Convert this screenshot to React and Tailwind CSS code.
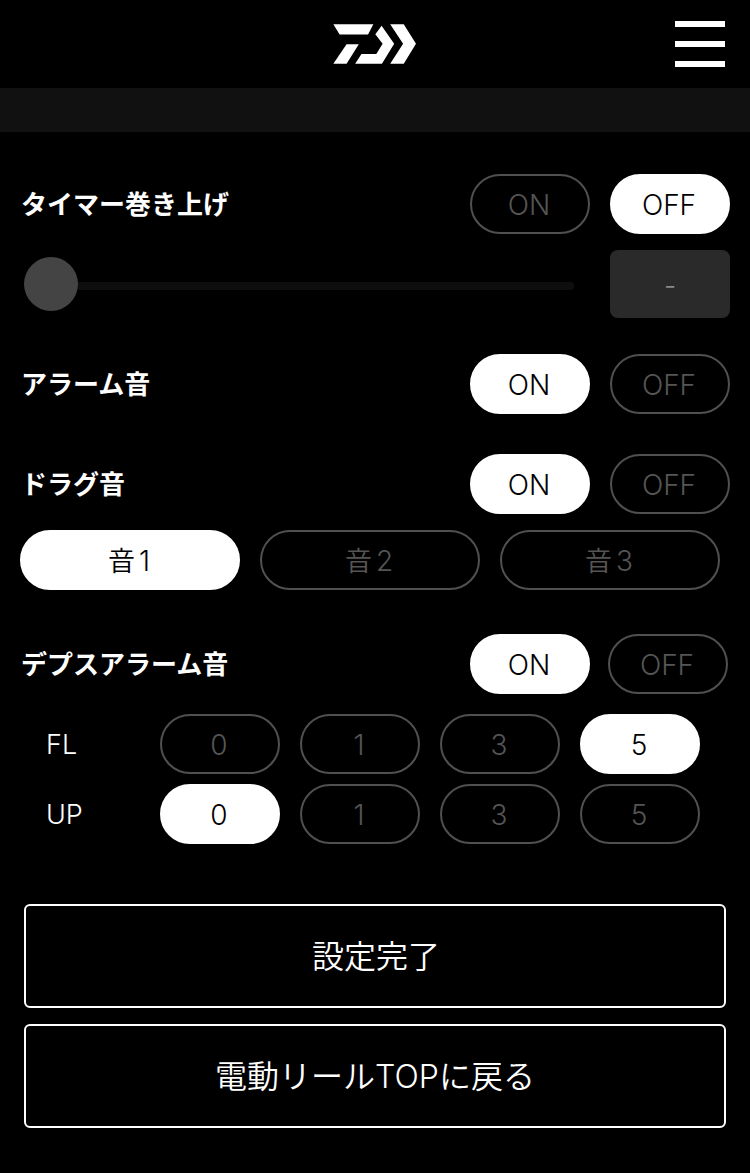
import React, { useState } from 'react';
import clsx from 'clsx';

const SOUNDS = ['1', '2', '3'];
const DEPTHS = ['0', '1', '3', '5'];

function Logo() {
  return (
    <svg viewBox="38 41 252 121" className="w-[84px] h-[40px]" fill="#fff" aria-label="DAIWA">
      <path d="M38 42H159L143 73H57Z" />
      <path d="M78 102H115L78 161H38Z" />
      <path d="M184 46L222 101L185 161H104L123 132H168L187 101L165 72Z" />
      <path d="M210 42H251L288 101L251 161H210L249 101Z" />
    </svg>
  );
}

function Pill({ active, onClick, className, children }) {
  return (
    <button
      onClick={onClick}
      className={clsx(
        'flex h-[60px] shrink-0 items-center justify-center rounded-full border-2 pt-0.5 pr-0.5 text-[28px] leading-none font-[350]',
        active ? 'border-white bg-white text-black' : 'border-[#505050] text-[#555555]',
        className
      )}
    >
      {children}
    </button>
  );
}

function ToggleRow({ label, on, onChange, className = 'pr-5', gap = 'gap-5' }) {
  return (
    <div className={clsx('flex items-center justify-between pl-[21px]', className)}>
      <h2 className="pt-0.5 text-[26px] leading-none font-bold">{label}</h2>
      <div className={clsx('flex', gap)}>
        <Pill active={on} onClick={() => onChange(true)} className="w-[120px]">ON</Pill>
        <Pill active={!on} onClick={() => onChange(false)} className="w-[120px]">OFF</Pill>
      </div>
    </div>
  );
}

function DepthRow({ label, value, onChange }) {
  return (
    <div className="flex items-center pl-[46px]">
      <span className="w-[114px] text-[27px] leading-none font-[350]">{label}</span>
      <div className="flex gap-5">
        {DEPTHS.map((depth) => (
          <Pill key={depth} active={value === depth} onClick={() => onChange(depth)} className="w-[120px]">
            {depth}
          </Pill>
        ))}
      </div>
    </div>
  );
}

export default function App() {
  const [timer, setTimer] = useState(false);
  const [alarm, setAlarm] = useState(true);
  const [drag, setDrag] = useState(true);
  const [sound, setSound] = useState('1');
  const [depthAlarm, setDepthAlarm] = useState(true);
  const [fl, setFl] = useState('5');
  const [up, setUp] = useState('0');

  return (
    <div className="min-h-[1173px] w-full bg-black font-['Inter','Noto_Sans_CJK_JP',sans-serif] font-light text-white">
      {/* Header */}
      <header className="grid h-[88px] grid-cols-3 items-center pr-[25px]">
        <span />
        <div className="flex justify-center pl-[25px]">
          <Logo />
        </div>
        <button className="flex w-[50px] flex-col gap-3.5 justify-self-end" aria-label="menu">
          <span className="h-1.5 bg-white" />
          <span className="h-1.5 bg-white" />
          <span className="h-1.5 bg-white" />
        </button>
      </header>
      <div className="h-11 bg-[#111111]" />

      <main className="pt-[42px]">
        <ToggleRow label="タイマー巻き上げ" on={timer} onChange={setTimer} />

        {/* Timer slider */}
        <div className="mt-4 flex h-[68px] items-center justify-between pr-5 pl-6">
          <div className="flex w-[550px] items-center">
            <div className="size-[54px] shrink-0 rounded-full bg-[#444444]" />
            <div className="mt-1 h-2 flex-1 rounded-r-full bg-[#0e0e0e]" />
          </div>
          <div className="flex h-full w-[120px] items-center justify-center rounded-lg bg-[#2a2a2a] pt-1 text-[27px] text-[#8a8a8a]">
            -
          </div>
        </div>

        <div className="mt-9">
          <ToggleRow label="アラーム音" on={alarm} onChange={setAlarm} />
        </div>

        <div className="mt-10">
          <ToggleRow label="ドラグ音" on={drag} onChange={setDrag} />
          <div className="mt-4 flex gap-5 pl-5">
            {SOUNDS.map((n) => (
              <Pill key={n} active={sound === n} onClick={() => setSound(n)} className="w-[220px] gap-1">
                <span className="text-[27px]">音</span>
                <span>{n}</span>
              </Pill>
            ))}
          </div>
        </div>

        <div className="mt-11">
          <ToggleRow
            label="デプスアラーム音"
            on={depthAlarm}
            onChange={setDepthAlarm}
            className="pr-[22px]"
            gap="gap-[18px]"
          />
          <div className="mt-5 space-y-2.5">
            <DepthRow label="FL" value={fl} onChange={setFl} />
            <DepthRow label="UP" value={up} onChange={setUp} />
          </div>
        </div>

        <div className="mt-[60px] space-y-4 px-6">
          <button className="block h-[104px] w-full rounded-md border-2 border-white pt-0.5 pl-0.5 text-[32px] leading-none font-[350]">
            設定完了
          </button>
          <button className="block h-[104px] w-full rounded-md border-2 border-white pt-0.5 text-[32px] leading-none font-[350]">
            電動リールTOPに戻る
          </button>
        </div>
      </main>
    </div>
  );
}
